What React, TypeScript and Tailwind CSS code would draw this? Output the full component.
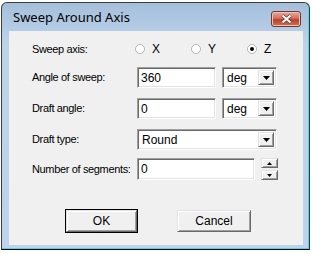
const sunken =
  "border border-t-[#a0a0a0] border-l-[#a0a0a0] border-b-white border-r-white shadow-[inset_1px_1px_0_#696969,inset_-1px_-1px_0_#e3e3e3] bg-white";
const raised =
  "border border-t-[#e3e3e3] border-l-[#e3e3e3] border-b-[#696969] border-r-[#696969] shadow-[inset_1px_1px_0_#ffffff,inset_-1px_-1px_0_#a0a0a0] bg-[#f0f0f0]";

function Arrow({ up = false, w = 7 }: { up?: boolean; w?: number }) {
  const h = Math.ceil(w / 2);
  return (
    <svg width={w} height={h} viewBox={`0 0 ${w} ${h}`}>
      <polygon
        points={up ? `0,${h} ${w},${h} ${w / 2},0` : `0,0 ${w},0 ${w / 2},${h}`}
        fill="#000"
      />
    </svg>
  );
}

function Combo({ value, width }: { value: string; width: string }) {
  return (
    <div className={`${sunken} ${width} h-[21px] flex items-center p-[2px]`}>
      <span className="flex-1 pl-[2px] text-[12px] leading-none">{value}</span>
      <div className={`${raised} w-[16px] h-full flex items-center justify-center`}>
        <Arrow />
      </div>
    </div>
  );
}

function Radio({ label, checked = false }: { label: string; checked?: boolean }) {
  return (
    <div className="flex items-center gap-[7px]">
      <svg width="10" height="10" viewBox="0 0 10 10">
        <circle cx="5" cy="5" r="4.5" fill="#fff" stroke="#b5b5b5" />
        {checked && <circle cx="5" cy="5" r="2" fill="#000" />}
      </svg>
      <span className="text-[12px] leading-none">{label}</span>
    </div>
  );
}

function Row({ label, children }: { label: string; children: React.ReactNode }) {
  return (
    <div className="flex items-center h-[21px]">
      <span className="w-[105px] text-[11px] leading-none whitespace-nowrap tracking-[-0.35px]">{label}</span>
      {children}
    </div>
  );
}

export default function App() {
  return (
    <div className="w-[312px] h-[254px] bg-white pt-[2px] pl-[1px]">
      <div className="w-[309px] h-[248px] rounded-t-[6px] border border-[#3c3c3c] border-b-black bg-[linear-gradient(#a5bfdb,#bcd3ea_40px,#bcd4ec)] shadow-[inset_-1px_-1px_0_#3fd9f0] flex flex-col pl-[7px] pr-[6px] pb-[4px]">
        {/* Title bar */}
        <div className="h-[28px] flex items-start justify-between">
          <span
            className="mt-[8px] ml-[4px] text-[13px] leading-none text-black"
            style={{ fontFamily: '"Noto Sans", sans-serif' }}
          >
            Sweep Around Axis
          </span>
          <div className="mt-[8px] mr-[2px] w-[30px] h-[16px] rounded-[3px] border border-[#6e3a2e] bg-[linear-gradient(#e8a999,#d1705b_45%,#b8402c_55%,#cf7058)] flex items-center justify-center shadow-[inset_0_0_0_1px_#f2c0b0]">
            <svg width="11" height="10" viewBox="0 0 11 10">
              <path d="M1.5 1.5 L9.5 8.5 M9.5 1.5 L1.5 8.5" stroke="#5a2a22" strokeWidth="3.4" />
              <path d="M1.5 1.5 L9.5 8.5 M9.5 1.5 L1.5 8.5" stroke="#fff" strokeWidth="2.2" />
            </svg>
          </div>
        </div>

        {/* Client area */}
        <div
          className="flex-1 bg-[#f0f0f0] flex flex-col pl-[23px] pt-[13px] text-black"
          style={{ fontFamily: '"Liberation Sans", Arial, sans-serif' }}
        >
          <div className="flex items-center h-[10px]">
            <span className="w-[103px] text-[11px] leading-none tracking-[-0.35px]">Sweep axis:</span>
            <div className="flex items-center gap-[31px]">
              <Radio label="X" />
              <Radio label="Y" />
              <Radio label="Z" checked />
            </div>
          </div>

          <div className="mt-[13px] flex flex-col gap-[10px]">
            <Row label="Angle of sweep:">
              <div className={`${sunken} w-[79px] h-[21px] flex items-center pl-[3px] text-[12px] leading-none`}>360</div>
              <div className="ml-[6px]">
                <Combo value="deg" width="w-[55px]" />
              </div>
            </Row>
            <Row label="Draft angle:">
              <div className={`${sunken} w-[79px] h-[21px] flex items-center pl-[3px] text-[12px] leading-none`}>0</div>
              <div className="ml-[6px]">
                <Combo value="deg" width="w-[55px]" />
              </div>
            </Row>
            <Row label="Draft type:">
              <Combo value="Round" width="w-[140px]" />
            </Row>
          </div>

          <div className="mt-[8px] flex items-center h-[22px]">
            <span className="w-[105px] text-[11px] leading-none whitespace-nowrap tracking-[-0.35px]">Number of segments:</span>
            <div className={`${sunken} w-[118px] h-[22px] flex items-center pl-[3px] text-[12px] leading-none`}>0</div>
            <div className="ml-[6px] flex flex-col gap-[2px]">
              <div className={`${raised} w-[17px] h-[10px] flex items-center justify-center`}>
                <Arrow up w={5} />
              </div>
              <div className={`${raised} w-[17px] h-[10px] flex items-center justify-center`}>
                <Arrow w={5} />
              </div>
            </div>
          </div>

          <div className="mt-[30px] flex items-center pl-[34px] gap-[40px]">
            <button className={`${raised} w-[71px] h-[22px] text-[12px] leading-none outline outline-1 outline-black`}>
              OK
            </button>
            <button className={`${raised} w-[74px] h-[22px] text-[12px] leading-none`}>Cancel</button>
          </div>
        </div>
      </div>
    </div>
  );
}
